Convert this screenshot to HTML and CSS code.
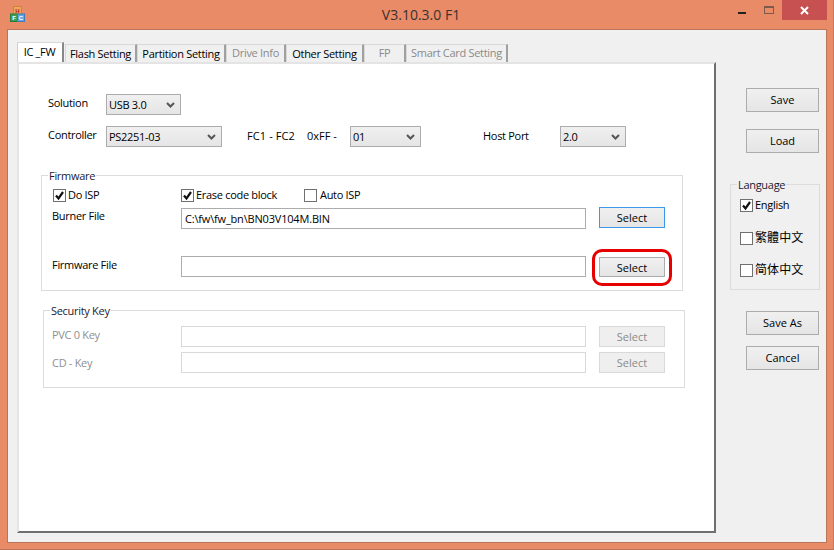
FILE: index.html
```html
<!DOCTYPE html>
<html lang="en">
<head>
<meta charset="utf-8">
<title>V3.10.3.0 F1</title>
<link rel="stylesheet" href="styles.css">
</head>
<body>
<div class="window">
  <header class="titlebar">
    <svg class="app-icon" width="15" height="16" viewBox="0 0 15 16">
      <rect x="3.5" y="0.5" width="8" height="7.5" fill="#efa85a" stroke="#c9853f"/>
      <rect x="0.5" y="8" width="7" height="7.5" fill="#3f9e55" stroke="#2a7a3c"/>
      <rect x="7.5" y="8" width="7" height="7.5" fill="#62a6e4" stroke="#3c7cba"/>
      <text class="icon-h" x="7.5" y="6.5">H</text>
      <text class="icon-l" x="4" y="14">F</text>
      <text class="icon-l" x="11" y="14">C</text>
    </svg>
    <div class="title">V3.10.3.0 F1</div>
    <div class="caption-buttons">
      <span class="cap-min"></span>
      <span class="cap-max"></span>
      <span class="cap-close">
        <svg width="9" height="9" viewBox="0 0 9 9"><path d="M1 1 8 8M8 1 1 8" stroke="#fff" stroke-width="2"/></svg>
      </span>
    </div>
  </header>
  <main class="client">
    <section class="tabs-area">
      <nav class="tabs">
        <span class="tab active">IC _FW</span>
        <span class="tab w-flash">Flash Setting</span>
        <span class="tab w-part">Partition Setting</span>
        <span class="tab off w-drive">Drive Info</span>
        <span class="tab w-other">Other Setting</span>
        <span class="tab off w-fp">FP</span>
        <span class="tab off w-smart">Smart Card Setting</span>
      </nav>
      <div class="panel">
        <div class="row row-solution">
          <span class="label">Solution</span>
          <div class="combo w75"><span>USB 3.0</span><svg class="chev" width="9" height="6" viewBox="0 0 9 6"><path d="M1 1 4.5 4.5 8 1" fill="none" stroke="#555" stroke-width="2"/></svg></div>
        </div>
        <div class="row row-controller">
          <span class="label">Controller</span>
          <div class="combo w116"><span>PS2251-03</span><svg class="chev" width="9" height="6" viewBox="0 0 9 6"><path d="M1 1 4.5 4.5 8 1" fill="none" stroke="#555" stroke-width="2"/></svg></div>
          <span class="txt fc">FC1 - FC2</span>
          <span class="txt oxff">0xFF -</span>
          <div class="combo w71"><span>01</span><svg class="chev" width="9" height="6" viewBox="0 0 9 6"><path d="M1 1 4.5 4.5 8 1" fill="none" stroke="#555" stroke-width="2"/></svg></div>
          <span class="txt host">Host Port</span>
          <div class="combo w66"><span>2.0</span><svg class="chev" width="9" height="6" viewBox="0 0 9 6"><path d="M1 1 4.5 4.5 8 1" fill="none" stroke="#555" stroke-width="2"/></svg></div>
        </div>

        <fieldset class="group firmware">
          <legend>Firmware</legend>
          <div class="checks">
            <label class="check c-isp"><span class="box"><svg width="11" height="11" viewBox="0 0 11 11"><path d="M2 5.5 4.5 8.5 9 2" fill="none" stroke="#111" stroke-width="2.2"/></svg></span>Do ISP</label>
            <label class="check c-erase"><span class="box"><svg width="11" height="11" viewBox="0 0 11 11"><path d="M2 5.5 4.5 8.5 9 2" fill="none" stroke="#111" stroke-width="2.2"/></svg></span>Erase code block</label>
            <label class="check c-auto"><span class="box"></span>Auto ISP</label>
          </div>
          <div class="file-row burner">
            <span class="file-label">Burner File</span>
            <div class="input">C:\fw\fw_bn\BN03V104M.BIN</div>
            <button class="btn sel focus">Select</button>
          </div>
          <div class="file-row fwfile">
            <span class="file-label pad1">Firmware File</span>
            <div class="input"></div>
            <button class="btn sel nudge">Select<span class="callout"></span></button>
          </div>
        </fieldset>

        <fieldset class="group security">
          <legend>Security Key</legend>
          <div class="file-row dis first">
            <span class="file-label pad1">PVC 0 Key</span>
            <div class="input"></div>
            <button class="btn sel" disabled>Select</button>
          </div>
          <div class="file-row dis second">
            <span class="file-label pad3">CD - Key</span>
            <div class="input"></div>
            <button class="btn sel" disabled>Select</button>
          </div>
        </fieldset>
      </div>
    </section>

    <aside class="side">
      <button class="btn act b-save">Save</button>
      <button class="btn act b-load">Load</button>
      <fieldset class="group lang">
        <legend>Language</legend>
        <label class="check c-en"><span class="box"><svg width="11" height="11" viewBox="0 0 11 11"><path d="M2 5.5 4.5 8.5 9 2" fill="none" stroke="#111" stroke-width="2.2"/></svg></span>English</label>
        <label class="check cjk c-tc"><span class="box"></span>繁體中文</label>
        <label class="check cjk c-sc"><span class="box"></span>简体中文</label>
      </fieldset>
      <button class="btn act b-saveas">Save As</button>
      <button class="btn act b-cancel">Cancel</button>
    </aside>
  </main>
</div>
</body>
</html>
```
FILE: styles.css
```css
* { box-sizing: border-box; }
html, body { margin: 0; padding: 0; }
body { width: 834px; height: 550px; overflow: hidden; font-family: "Open Sans", "Noto Sans CJK TC", sans-serif; font-size: 11px; letter-spacing: -0.3px; color: #000; }
.window { width: 834px; height: 550px; background: #e98b66; display: flex; flex-direction: column; border-bottom: 1px solid #b9745a; border-right: 1px solid #c47a5c; }

.titlebar { height: 29px; flex: none; position: relative; display: flex; }
.app-icon { margin: 6px 0 0 10px; }
.icon-h { font: bold 6px "Liberation Sans", sans-serif; letter-spacing: 0; fill: #b02020; text-anchor: middle; }
.icon-l { font: bold 6px "Liberation Sans", sans-serif; letter-spacing: 0; fill: #fff; text-anchor: middle; }
.title { position: absolute; left: 9px; right: 0; top: 5px; text-align: center; font-size: 14px; line-height: 20px; color: #3c3030; letter-spacing: 0; }
.caption-buttons { margin-left: auto; margin-right: 6px; display: flex; align-items: flex-start; }
.cap-min { width: 8px; height: 2px; background: #222; margin: 12px 18px 0 0; }
.cap-max { width: 10px; height: 8px; border: 1px solid #7c5a4c; border-top-width: 2px; margin: 6px 8px 0 0; }
.cap-close { width: 45px; height: 20px; background: #c75050; display: flex; align-items: center; justify-content: center; }

.client { flex: none; width: 820px; height: 514px; margin-left: 7px; background: #f0f0f0; border: 1px solid #b9745a; display: flex; }
.tabs-area { width: 708px; flex: none; padding: 12px 0 0 9px; }
.tabs { display: flex; height: 20px; align-items: flex-end; position: relative; z-index: 1; }
.tab { height: 18px; line-height: 17px; text-align: center; background: #f0f0f0; border-right: 2px solid #a0a0a0; border-top: 1px solid #d8d8d8; border-left: 1px solid #d8d8d8; white-space: nowrap; }
.tab.active { height: 20px; line-height: 17px; width: 47px; padding-right: 1px; background: #fff; border-left: 1px solid #d0d0d0; border-right: 2px solid #888; margin-right: 1px; }
.tab.off { color: #8a8a8a; line-height: 15px; }
.w-flash { width: 72px; }
.w-part { width: 89px; }
.w-drive { width: 60px; }
.w-other { width: 78px; }
.w-fp { width: 42px; }
.w-smart { width: 102px; }

.panel { width: 699px; height: 471px; background: #fff; border: 2px solid #e4e4e4; border-right-color: #6f6f6f; border-bottom-color: #6f6f6f; padding: 30px 0 0 29px; position: relative; }

.row { display: flex; align-items: flex-start; }
.row-solution { height: 32px; }
.row-controller { height: 28px; }
.label { width: 58px; line-height: 18px; }
.txt { line-height: 18px; margin-top: 1px; }
.fc { margin-left: 25px; width: 60px; letter-spacing: 0.1px; }
.oxff { width: 43px; letter-spacing: 0; }
.host { margin-left: 62px; width: 77px; }
.combo { height: 21px; border: 1px solid #acacac; background: linear-gradient(#f0f0f0, #e5e5e5); display: flex; align-items: center; justify-content: space-between; padding: 0 5px 0 2px; line-height: 19px; }
.w75 { width: 75px; }
.w116 { width: 116px; }
.w71 { width: 71px; }
.w66 { width: 66px; }

.group { margin: 0; padding: 0; border: 1px solid #dcdcdc; min-width: 0; }
.group legend { padding: 0 1px; margin-left: 6px; line-height: 16px; height: 14px; color: #1a1a33; }
.firmware { width: 642px; height: 123px; margin: 14px 0 0 -7px; }
.security { width: 642px; height: 85px; margin: 12px 0 0 -5px; }

.checks { display: flex; padding: 6px 0 0 11px; height: 26px; }
.check { display: flex; align-items: center; height: 14px; line-height: 14px; white-space: nowrap; }
.box { width: 13px; height: 13px; border: 1px solid #707070; background: #fff; margin-right: 2px; display: flex; align-items: center; justify-content: center; flex: none; }
.c-isp { width: 128px; }
.c-erase { width: 123px; }
.c-auto .box { margin-right: 3px; }

.file-row { display: flex; align-items: flex-start; padding-left: 10px; }
.file-label { width: 129px; line-height: 16px; }
.pad1 { padding-top: 1px; }
.pad3 { padding-top: 3px; }
.input { width: 405px; height: 21px; border: 1px solid #acacac; background: #fff; line-height: 19px; padding-left: 3px; letter-spacing: -0.18px; }
.btn { font: inherit; letter-spacing: 0; color: #000; border: 1px solid #acacac; background: linear-gradient(#f0f0f0, #e5e5e5); padding: 0; height: 21px; line-height: 18px; text-align: center; position: relative; }
.sel { width: 66px; margin-left: 13px; }
.focus { border-color: #3c9ae8; margin-top: -1px; }
.burner { height: 48px; }
.fwfile { height: 30px; }
.nudge { margin-top: 1px; height: 20px; line-height: 20px; }
.callout { position: absolute; left: -8px; top: -9px; width: 80px; height: 37px; border: 3px solid #e60000; border-radius: 10px; pointer-events: none; }

.dis { padding-left: 8px; height: 26px; }
.dis .file-label { color: #8f8f8f; }
.dis .input { border-color: #d9d9d9; }
.btn:disabled { color: #8a8a8a; background: #efefef; border-color: #d9d9d9; }
.first { margin-top: 9px; }

.side { flex: 1; padding: 58px 0 0 14px; display: flex; flex-direction: column; align-items: flex-start; }
.act { width: 73px; height: 24px; margin-left: 16px; }
.b-load { margin-top: 17px; }
.lang { width: 90px; height: 113px; margin-top: 24px; padding-left: 9px; }
.lang legend { margin-left: -3px; }
.c-en { margin-top: 7px; }
.cjk { font-size: 12px; letter-spacing: 0.1px; }
.c-tc { margin-top: 19px; }
.c-sc { margin-top: 18px; }
.b-saveas { margin-top: 21px; }
.b-cancel { margin-top: 11px; }
```
